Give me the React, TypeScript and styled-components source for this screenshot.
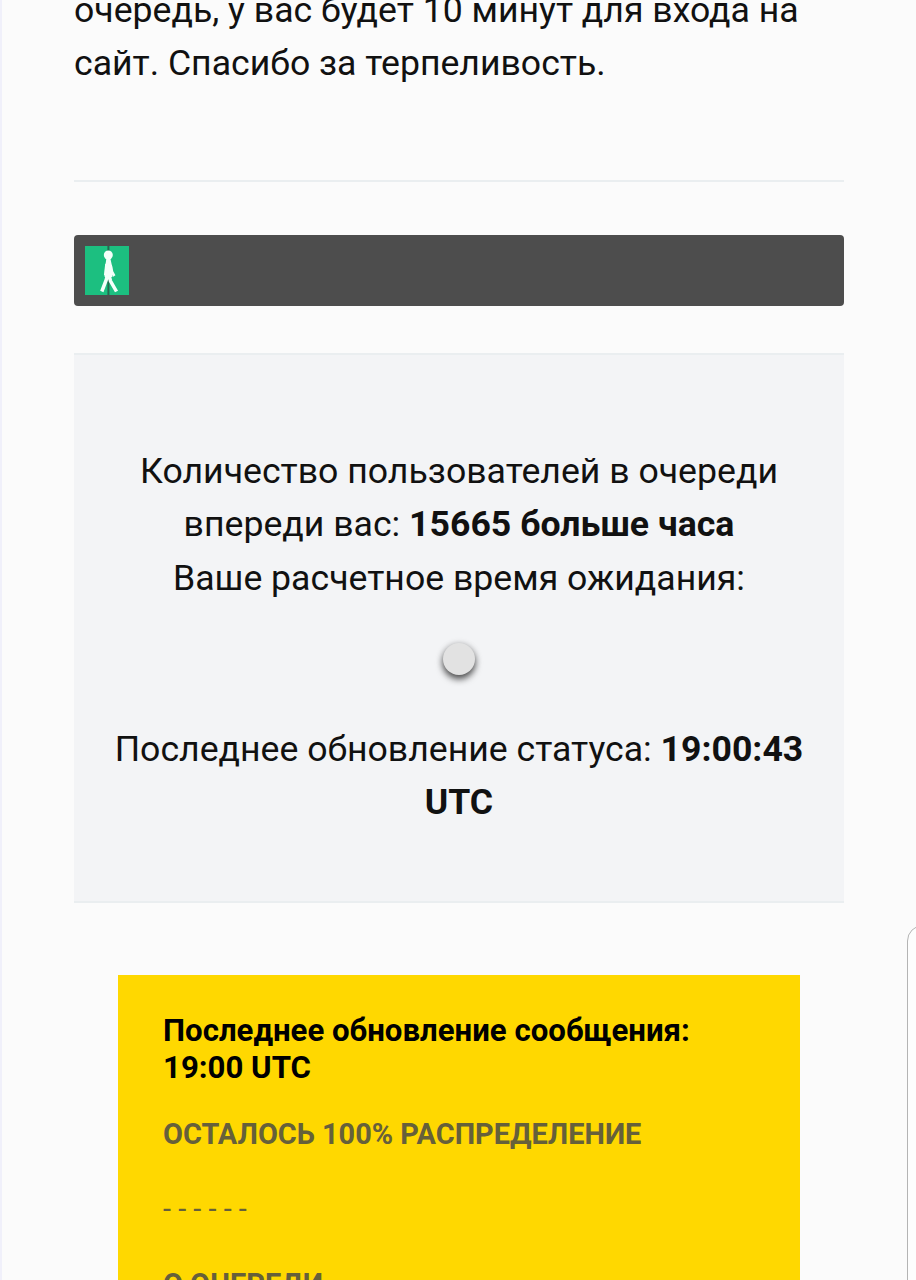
import styled, { createGlobalStyle } from 'styled-components'

const colors = {
  page: '#fbfbfb',
  text: '#111111',
  line: '#eaeef0',
  panel: '#f3f4f6',
  bar: '#4d4d4d',
  green: '#1cbf80',
  yellow: '#ffd800',
}

const GlobalStyle = createGlobalStyle`
  * { box-sizing: border-box; }
  body {
    margin: 0;
    background: ${colors.page};
    color: ${colors.text};
    font-family: Roboto, 'Noto Sans', sans-serif;
  }
`

const Page = styled.main`
  position: relative;
  display: flow-root;
  height: 1280px;
  overflow: hidden;
  padding: 0 72px 0 72px;
  border-left: 2px solid #f0f0fa;
`

const Intro = styled.p`
  margin: -16.4px 0 0;
  font-size: 35.62px;
  line-height: 53.5px;
  white-space: nowrap;
`

const Divider = styled.hr`
  height: 1.5px;
  margin: 89.4px 0 53.5px;
  border: 0;
  background: ${colors.line};
`

/* Прогресс очереди */
const ProgressBar = styled.div`
  display: flex;
  align-items: center;
  height: 71px;
  padding: 0 11px;
  border-radius: 4px;
  background: ${colors.bar};
`

const StatusPanel = styled.section`
  height: 550px;
  margin-top: 47px;
  padding-top: 89.5px;
  border-top: 2px solid ${colors.line};
  border-bottom: 2px solid ${colors.line};
  background: ${colors.panel};
  text-align: center;
`

const StatusText = styled.p`
  margin: 0;
  font-size: 35.64px;
  line-height: 53.5px;
  white-space: nowrap;
`

const Spinner = styled.div`
  width: 32px;
  height: 32px;
  margin: 38px auto 47.5px;
  border-radius: 50%;
  background: #e2e2e2;
  box-shadow: 0 4px 7px rgba(0, 0, 0, 0.65), 0 1px 7px rgba(0, 0, 0, 0.18);
`

const Notice = styled.section`
  height: 400px;
  margin: 71.5px 44px 0;
  padding: 37px 45px;
  background: ${colors.yellow};
  white-space: nowrap;
`

const NoticeTitle = styled.h2`
  margin: 0 0 26px;
  font-size: 31.2px;
  line-height: 37.4px;
  font-weight: 700;
  color: #000;
`

const NoticeLine = styled.p<{ $bold?: boolean }>`
  margin: 0 0 30px;
  font-size: 28.92px;
  line-height: 44.6px;
  font-weight: ${({ $bold }) => ($bold ? 700 : 400)};
  color: #66603a;
`

/* Край плавающей карточки справа */
const SideSheet = styled.div`
  position: absolute;
  top: 925px;
  left: 905px;
  width: 60px;
  height: 400px;
  border: 1.5px solid #b4b4b4;
  border-radius: 16px;
  background: #fdfdfd;
`

function Walker() {
  return (
    <svg width="44" height="49" viewBox="0 0 44 49" fill="none" aria-hidden="true">
      <rect width="44" height="49" fill={colors.green} />
      <path d="M23.4 0V49" stroke="#27694f" strokeWidth="2" />
      <circle cx="23.3" cy="9" r="4.5" fill="#f4fffa" />
      <path d="M21.3 13h4.2l1.7 8 .2 10h-7.8l.5-10z" fill="#f4fffa" />
      <path d="M21.5 18l-1.3 11.5M25.6 19l1.5 7 2.2 4" stroke="#f4fffa" strokeWidth="2.6" />
      <path d="M22.5 29l-1.3 5-4.4 11.5M24 29l1.5 6 6 10.5" stroke="#f4fffa" strokeWidth="3.5" />
    </svg>
  )
}

export default function App() {
  return (
    <>
      <GlobalStyle />
      <Page>
        <Intro>
          очередь, у вас будет 10 минут для входа на
          <br />
          сайт. Спасибо за терпеливость.
        </Intro>
        <Divider />
        <ProgressBar>
          <Walker />
        </ProgressBar>

        <StatusPanel>
          <StatusText>
            Количество пользователей в очереди
            <br />
            впереди вас: <b>15665 больше часа</b>
            <br />
            Ваше расчетное время ожидания:
          </StatusText>
          <Spinner />
          <StatusText>
            Последнее обновление статуса: <b>19:00:43</b>
            <br />
            <b>UTC</b>
          </StatusText>
        </StatusPanel>

        <Notice>
          <NoticeTitle>
            Последнее обновление сообщения:
            <br />
            19:00 UTC
          </NoticeTitle>
          <NoticeLine $bold>ОСТАЛОСЬ 100% РАСПРЕДЕЛЕНИЕ</NoticeLine>
          <NoticeLine>- - - - - -</NoticeLine>
          <NoticeLine $bold>О ОЧЕРЕДИ</NoticeLine>
        </Notice>

        <SideSheet />
      </Page>
    </>
  )
}
